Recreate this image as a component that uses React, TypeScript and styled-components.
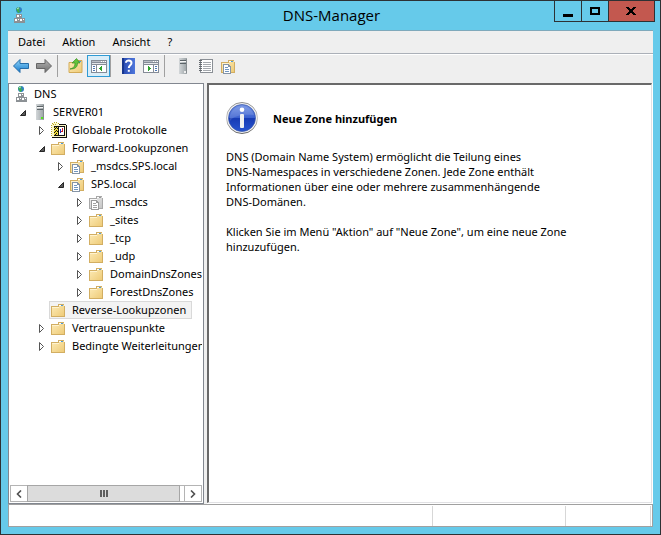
import React from 'react';
import styled, { createGlobalStyle } from 'styled-components';

const GlobalStyle = createGlobalStyle`
  *, *::before, *::after { box-sizing: border-box; }
  body { margin: 0; }
  body, button { font-family: "Noto Sans", "Open Sans", sans-serif; font-size: 11px; color: #000; }
  button { padding: 0; margin: 0; border: 0; background: none; }
  svg { display: block; flex: none; }
`;

const Window = styled.div`
  display: flex;
  flex-direction: column;
  min-height: 100vh;
  padding: 0 7px 7px;
  border: 1px solid #2d3134;
  background: #66caea;
`;

const TitleBar = styled.header`
  display: grid;
  grid-template-columns: 101px 1fr 101px;
  height: 29px;
  margin: 0 -2px 0 0;
`;

const TitleIcon = styled.div`
  padding: 6px 0 0 3px;
`;

const Title = styled.h1`
  margin: 0;
  font-family: "Open Sans", sans-serif;
  font-size: 15px;
  font-weight: 400;
  line-height: 29px;
  text-align: center;
`;

const Caption = styled.div`
  display: flex;
  height: 21px;
  border: 1px solid #2d3134;
  border-top: 0;
`;

const CaptionButton = styled.button<{ $grow: number; $close?: boolean }>`
  display: flex;
  flex: ${(p) => p.$grow} 1 0;
  align-items: center;
  justify-content: center;
  background: ${(p) => (p.$close ? '#c3584f' : 'transparent')};
  & + & { border-left: 1px solid #2d3134; }
`;

const Client = styled.main`
  display: flex;
  flex: 1;
  flex-direction: column;
  border-top: 1px solid #7fa9bb;
  background: #efefef;
`;

const MenuBar = styled.nav`
  display: flex;
  gap: 17px;
  height: 23px;
  padding: 0 10px;
  border-bottom: 1px solid #abb0b8;
`;

const MenuItem = styled.button`
  line-height: 22px;
`;

const Toolbar = styled.div`
  display: flex;
  align-items: center;
  height: 29px;
  padding: 0 1px 6px;
  border-top: 1px solid #fff;
`;

const ToolButton = styled.button<{ $pressed?: boolean }>`
  display: flex;
  align-items: center;
  justify-content: center;
  width: 23px;
  height: 22px;
  border: 1px solid ${(p) => (p.$pressed ? '#2f9bd4' : 'transparent')};
  background: ${(p) => (p.$pressed ? '#d9edf8' : 'transparent')};
`;

const Separator = styled.span<{ $wide?: boolean }>`
  width: 1px;
  height: 22px;
  margin: 0 ${(p) => (p.$wide ? 5 : 6)}px 0 ${(p) => (p.$wide ? 0 : 2)}px;
  background: #a0a0a0;
`;

const Panes = styled.div`
  display: grid;
  flex: 1;
  grid-template-columns: 196px minmax(0, 1fr);
  gap: 3px;
`;

const TreePane = styled.section`
  display: flex;
  flex-direction: column;
  min-width: 0;
  padding: 1px;
  border: 1px solid #828790;
  background: #fff;
`;

const Tree = styled.ul`
  flex: 1;
  margin: 0;
  padding: 0;
  overflow: hidden;
  list-style: none;
`;

const TreeRow = styled.li<{ $level: number }>`
  display: flex;
  align-items: center;
  height: 18px;
  padding-left: ${(p) => (p.$level ? p.$level * 19 - 10 : 1)}px;
  white-space: nowrap;
`;

const Expander = styled.button`
  display: flex;
  flex: none;
  align-items: center;
  width: 11px;
  height: 18px;
`;

const Spacer = styled.span`
  flex: none;
  width: 11px;
`;

const Node = styled.span<{ $selected?: boolean }>`
  display: flex;
  flex: none;
  align-items: center;
  gap: 5px;
  height: 18px;
  padding: 0 5px 0 1px;
  border: 1px solid ${(p) => (p.$selected ? '#d9d9d9' : 'transparent')};
  background: ${(p) => (p.$selected ? '#f3f3f3' : 'transparent')};
  line-height: 16px;
`;

const ScrollBar = styled.div`
  display: flex;
  height: 17px;
  border: 1px solid #b4b4b4;
`;

const ScrollButton = styled.button`
  display: flex;
  align-items: center;
  justify-content: center;
  width: 16px;
`;

const ScrollTrack = styled.div`
  display: flex;
  flex: 1;
  padding-right: 4px;
  border-right: 1px solid #b4b4b4;
`;

const ScrollThumb = styled.div`
  display: flex;
  flex: 1;
  align-items: center;
  justify-content: center;
  margin: -1px 0;
  border: 1px solid #a6a6a6;
  background: #dcdcdc;
`;

const DetailFrame = styled.section`
  padding: 0 1px 1px 0;
  background: #fff;
`;

const Detail = styled.div`
  height: 100%;
  padding: 17px;
  border: 2px solid #696969;
  border-color: #696969 #e1e1e4 #e1e1e4 #696969;
  border-width: 2px 1px 1px 2px;
`;

const DetailHeading = styled.div`
  display: flex;
  align-items: center;
  gap: 15px;
  margin-bottom: 15px;
`;

const Heading = styled.h2`
  margin: 0;
  font-size: 11px;
  font-weight: 700;
`;

const Paragraph = styled.p`
  margin: 0 0 15px;
  line-height: 15px;
`;

const StatusBar = styled.footer`
  display: grid;
  grid-template-columns: minmax(0, 1fr) 133px 85px;
  height: 23px;
  padding: 1px 1px 0 0;
  border: 1px solid #a0a0a0;
  background: #fff;
`;

const StatusCell = styled.span`
  border-right: 1px solid #d7d7d7;
`;

const GradientStore = styled.svg`
  position: absolute;
`;

const Svg = ({ children, w = 16, h = 16, smooth }: { children: React.ReactNode; w?: number; h?: number; smooth?: boolean }) => (
  <svg width={w} height={h} viewBox={`0 0 ${w} ${h}`} shapeRendering={smooth ? 'auto' : 'crispEdges'} aria-hidden="true">
    {children}
  </svg>
);

const Gradients = () => (
  <GradientStore width="0" height="0" aria-hidden="true">
    <defs>
      <linearGradient id="folder" x2="1" y2="1"><stop stopColor="#fdebb6" /><stop offset="1" stopColor="#eecb78" /></linearGradient>
      <linearGradient id="grey" x2="1" y2="1"><stop stopColor="#ededed" /><stop offset="1" stopColor="#c6c6c6" /></linearGradient>
      <linearGradient id="blueArrow" x2="0" y2="1"><stop stopColor="#8fd6fa" /><stop offset="1" stopColor="#1679cc" /></linearGradient>
      <linearGradient id="greyArrow" x2="0" y2="1"><stop stopColor="#b5b5b5" /><stop offset="1" stopColor="#6e6e6e" /></linearGradient>
      <linearGradient id="book" x2="1" y2="0"><stop stopColor="#2446ad" /><stop offset="1" stopColor="#4f77dc" /></linearGradient>
      <linearGradient id="info" x2="0" y2="1"><stop stopColor="#7292e4" /><stop offset=".48" stopColor="#3c62d0" /><stop offset=".52" stopColor="#173bb4" /><stop offset="1" stopColor="#2855d0" /></linearGradient>
      <linearGradient id="rim" x2="0" y2="1"><stop stopColor="#8c8c8c" /><stop offset=".5" stopColor="#c9c9c9" /><stop offset="1" stopColor="#666" /></linearGradient>
      <linearGradient id="tower" x2="1" y2="0"><stop stopColor="#d3d7d9" /><stop offset="1" stopColor="#9aa1a4" /></linearGradient>
    </defs>
  </GradientStore>
);

const NetworkIcon = () => (
  <Svg smooth>
    <circle cx="8" cy="3" r="3" fill="#2f7fc8" />
    <path d="M5 2l2-2 2 1-1 2 1 2-2 1-1-2zM9 3h1v1H9z" fill="#3fae49" />
    <path d="M6 1.500l1-1h1l-1 2z" fill="#c5eaf5" />
    {[[5, 7], [3, 11], [8, 11]].map(([x, y]) => (
      <g key={x} shapeRendering="crispEdges">
        <rect x={x} y={y} width="6" height="4" fill="#8d9296" />
        <path d={`M${x + 1} ${y + 1}h2v2h-2zM${x + 4} ${y + 1}h1v1h-1z`} fill="#fff" />
      </g>
    ))}
    <path d="M3 15.500h11" stroke="#8b9094" />
  </Svg>
);

const FolderShape = ({ grey }: { grey?: boolean }) => (
  <>
    <path d="M0 4h7V2h6v2h1v11H0z" fill={grey ? '#a9a9a9' : '#d2ae62'} />
    <path d="M1 5h7V3h5v2h0v9H1z" fill={grey ? 'url(#grey)' : 'url(#folder)'} />
    <path d="M8 3h4v1H8z" fill="#fff" />
    <path d="M10 3h2v1h-2z" fill={grey ? '#999' : '#4b9bdc'} />
    <path d="M1 5h7v1H1z" fill={grey ? '#f8f8f8' : '#fff3cf'} />
  </>
);

const FolderIcon = () => <Svg><FolderShape /></Svg>;

const ZoneIcon = ({ grey }: { grey?: boolean }) => {
  const line = grey ? '#a2a2a2' : '#7096c0';
  return (
    <Svg>
      <FolderShape grey={grey} />
      <path d="M2 6h6v1h1v1h1v8H2z" fill={grey ? '#9a9a9a' : '#8594a5'} />
      <path d="M3 7h4v2h2v6H3z" fill="#fff" />
      <path d="M4 9.500h3M4 11.500h4M4 13.500h4" stroke={line} />
    </Svg>
  );
};

const LogsIcon = () => (
  <Svg>
    <path d="M1 1h6v2h8v12H1z" fill="#fbf7c4" />
    <path d="M1 1h1v1H1zM3 0h1v1H3zM5 0h1v1H5zM7 1h1v1H7zM0 3h1v1H0zM0 5h1v1H0zM0 7h1v1H0zM0 9h1v1H0zM0 11h1v1H0zM0 13h1v1H0zM2 2h1v1H2zM4 2h1v1H4z" fill="#b7a71e" />
    <path d="M8 2h7v1H8zM15 3h1v13h-1zM1 15h15v1H1z" fill="#111" />
    <path d="M3 4h10v1H3zM3 13h10v1H3zM13 4h1v10h-1zM7 5h1v8H7z" fill="#111" />
    <path d="M3 5h4v8H3z" fill="#f3df39" />
    <path d="M3 5h1v1H3zM5 5h1v1H5zM4 6h1v1H4zM6 6h1v1H6zM3 7h1v1H3zM5 8h1v1H5zM4 9h1v1H4zM6 9h1v1H6zM3 10h1v1H3zM5 11h1v1H5zM4 12h1v1H4z" fill="#111" />
    <path d="M8 5h5v8H8z" fill="#fff" />
    <path d="M9 7h1v4H9z" fill="#2437b7" />
    <path d="M11 6h1v4h-2V9h1z" fill="#d41c28" />
  </Svg>
);

const ServerIcon = ({ running }: { running?: boolean }) => (
  <Svg>
    <path d="M4 0h8v16H4z" fill="url(#tower)" />
    <path d="M5 2h6v1H5zM5 5h6v1H5z" fill="#5b6367" />
    <path d="M5 3h6v1H5z" fill="#f5f5f5" />
    <path d="M11 1h1v14h-1z" fill="#858b8e" />
    <path d="M9 13h2v2H9z" fill={running ? '#54e41e' : '#eee'} />
  </Svg>
);

const ArrowIcon = ({ forward }: { forward?: boolean }) => (
  <Svg smooth>
    <path
      d={forward ? 'M15.5 8L9 1.5v4H.5v5H9v4z' : 'M.5 8L7 1.5v4h8.5v5H7v4z'}
      fill={forward ? 'url(#greyArrow)' : 'url(#blueArrow)'}
      stroke={forward ? '#666' : '#256da9'}
    />
  </Svg>
);

const UpFolderIcon = () => (
  <Svg smooth>
    <path d="M1 4.5h6l1-2h6v12H1z" fill="url(#folder)" stroke="#d3ab57" />
    <path d="M10 3h3v1h-3z" fill="#4b9bdc" />
    <path d="M2 11c4-1 5-3 5-6H4l4.500-4.500L12 5h-2.500c0 4-2 6-7.500 6z" fill="#62c33a" stroke="#398d25" strokeWidth=".7" />
  </Svg>
);

const PanelIcon = ({ right }: { right?: boolean }) => (
  <Svg>
    <path d="M0 2h16v13H0z" fill="#858c97" />
    <path d="M1 3h14v1H1z" fill="#b9bec6" />
    <path d="M10 3h1v1h-1zM12 3h1v1h-1zM14 3h1v1h-1z" fill="#fff" />
    <path d="M1 5h14v1H1z" fill="#e4e7eb" />
    <path d={right ? 'M1 7h9v7H1zM11 7h4v7h-4z' : 'M1 7h4v7H1zM6 7h9v7H6z'} fill="#fff" />
    <path d={right ? 'M12 8h2v1h-2zM12 10h2v1h-2zM12 12h2v1h-2z' : 'M2 8h2v1H2zM2 10h2v1H2zM2 12h2v1H2z'} fill="#4f78b4" />
    <path d={right ? 'M5 8h1v1h1v1h1v1H7v1H6v1H5z' : 'M11 8h-1v1H9v1H8v1h1v1h1v1h1z'} fill="#2da32d" />
  </Svg>
);

const HelpIcon = () => (
  <Svg smooth>
    <path d="M2 0h13v16H2z" fill="url(#book)" />
    <path d="M2 0h2v16H2z" fill="#17368e" />
    <path d="M6 4.800C6 1.700 11.500 1.700 11.500 5c0 2.300-2.700 2.200-2.700 5" fill="none" stroke="#fff" strokeWidth="2" />
    <path d="M7.800 11.800h2v2h-2z" fill="#fff" />
  </Svg>
);

const ListIcon = () => (
  <Svg>
    <path d="M2 1h13v14H2z" fill="#8a8f95" />
    <path d="M3 2h11v12H3z" fill="#fff" />
    <path d="M5 4h8v1H5zM5 6h8v1H5zM5 8h8v1H5zM5 10h8v1H5zM5 12h8v1H5z" fill="#a5a9ae" />
    <path d="M1 2h3v1H1zM1 4h3v1H1zM1 6h3v1H1zM1 8h3v1H1zM1 10h3v1H1zM1 12h3v1H1z" fill="#666b70" />
  </Svg>
);

const ExpanderIcon = ({ open }: { open?: boolean }) => (
  <Svg w={8} h={12} smooth>
    {open ? <path d="M6.500 4.500v5h-5z" fill="#595959" stroke="#262626" /> : <path d="M1.500 2.500v8l4-4z" fill="#fff" stroke="#555" />}
  </Svg>
);

const InfoIcon = () => (
  <Svg w={32} h={32} smooth>
    <circle cx="16" cy="16" r="15.5" fill="#f2f2f2" stroke="url(#rim)" />
    <circle cx="16" cy="16" r="13.5" fill="url(#info)" stroke="#3655a8" strokeWidth=".7" />
    <path d="M4 19C8 13 18 12 28 13A12.5 12.5 0 0 0 4 13z" fill="#fff" opacity=".13" />
    <circle cx="16" cy="7.8" r="2.3" fill="#fff" />
    <rect x="14" y="12" width="4" height="14" rx="1" fill="#f1f1f1" />
  </Svg>
);

const Chevron = ({ right }: { right?: boolean }) => (
  <Svg w={6} h={8} smooth>
    <path d={right ? 'M1 .5L4.5 4 1 7.5' : 'M5 .5L1.5 4 5 7.5'} fill="none" stroke="#505050" strokeWidth="1.6" />
  </Svg>
);

type TreeItem = { label: string; level: number; icon: React.ReactNode; open?: boolean; leaf?: boolean; selected?: boolean };

const items: TreeItem[] = [
  { label: 'DNS', level: 0, icon: <NetworkIcon />, leaf: true },
  { label: 'SERVER01', level: 1, icon: <ServerIcon running />, open: true },
  { label: 'Globale Protokolle', level: 2, icon: <LogsIcon /> },
  { label: 'Forward-Lookupzonen', level: 2, icon: <FolderIcon />, open: true },
  { label: '_msdcs.SPS.local', level: 3, icon: <ZoneIcon /> },
  { label: 'SPS.local', level: 3, icon: <ZoneIcon />, open: true },
  { label: '_msdcs', level: 4, icon: <ZoneIcon grey /> },
  { label: '_sites', level: 4, icon: <FolderIcon /> },
  { label: '_tcp', level: 4, icon: <FolderIcon /> },
  { label: '_udp', level: 4, icon: <FolderIcon /> },
  { label: 'DomainDnsZones', level: 4, icon: <FolderIcon /> },
  { label: 'ForestDnsZones', level: 4, icon: <FolderIcon /> },
  { label: 'Reverse-Lookupzonen', level: 2, icon: <FolderIcon />, leaf: true, selected: true },
  { label: 'Vertrauenspunkte', level: 2, icon: <FolderIcon /> },
  { label: 'Bedingte Weiterleitungen', level: 2, icon: <FolderIcon /> },
];

export default function App() {
  return (
    <>
      <GlobalStyle />
      <Gradients />
      <Window>
        <TitleBar>
          <TitleIcon><NetworkIcon /></TitleIcon>
          <Title>DNS-Manager</Title>
          <Caption>
            <CaptionButton $grow={27} aria-label="Minimieren">
              <Svg w={10} h={11}><path d="M0 8h10v3H0z" /></Svg>
            </CaptionButton>
            <CaptionButton $grow={26} aria-label="Maximieren">
              <Svg w={10} h={8}><path d="M1 1h8v6H1z" fill="none" stroke="#000" strokeWidth="2" /></Svg>
            </CaptionButton>
            <CaptionButton $grow={46} $close aria-label="Schließen">
              <Svg w={10} h={8}><path d="M0 0h3v1h1v1h2V1h1V0h3v1H9v1H8v1H7v2h1v1h1v1h1v1H7V7H6V6H4v1H3v1H0V7h1V6h1V5h1V3H2V2H1V1H0z" /></Svg>
            </CaptionButton>
          </Caption>
        </TitleBar>
        <Client>
          <MenuBar>
            {['Datei', 'Aktion', 'Ansicht', '?'].map((m) => <MenuItem key={m}>{m}</MenuItem>)}
          </MenuBar>
          <Toolbar>
            <ToolButton aria-label="Zurück"><ArrowIcon /></ToolButton>
            <ToolButton aria-label="Vorwärts"><ArrowIcon forward /></ToolButton>
            <Separator />
            <ToolButton aria-label="Eine Ebene nach oben"><UpFolderIcon /></ToolButton>
            <ToolButton $pressed aria-label="Konsolenstruktur einblenden"><PanelIcon /></ToolButton>
            <Separator $wide />
            <ToolButton aria-label="Hilfe"><HelpIcon /></ToolButton>
            <ToolButton aria-label="Aktionsbereich einblenden"><PanelIcon right /></ToolButton>
            <Separator />
            <ToolButton aria-label="Server"><ServerIcon /></ToolButton>
            <ToolButton aria-label="Liste"><ListIcon /></ToolButton>
            <ToolButton aria-label="Neue Zone"><ZoneIcon /></ToolButton>
          </Toolbar>
          <Panes>
            <TreePane>
              <Tree role="tree">
                {items.map((it) => (
                  <TreeRow key={it.label} $level={it.level} role="treeitem" aria-selected={!!it.selected} aria-level={it.level + 1}>
                    {it.level > 0 && it.leaf ? <Spacer /> : null}
                    {!it.leaf ? (
                      <Expander aria-label={`${it.label} ${it.open ? 'reduzieren' : 'erweitern'}`}><ExpanderIcon open={it.open} /></Expander>
                    ) : null}
                    <Node $selected={it.selected}>{it.icon}{it.label}</Node>
                  </TreeRow>
                ))}
              </Tree>
              <ScrollBar>
                <ScrollButton aria-label="Nach links"><Chevron /></ScrollButton>
                <ScrollTrack>
                  <ScrollThumb><Svg w={8} h={7}><path d="M0 0h2v7H0zM3 0h2v7H3zM6 0h2v7H6z" fill="#606060" /></Svg></ScrollThumb>
                </ScrollTrack>
                <ScrollButton aria-label="Nach rechts"><Chevron right /></ScrollButton>
              </ScrollBar>
            </TreePane>
            <DetailFrame>
              <Detail>
                <DetailHeading>
                  <InfoIcon />
                  <Heading>Neue Zone hinzufügen</Heading>
                </DetailHeading>
                <Paragraph>
                  DNS (Domain Name System) ermöglicht die Teilung eines<br />
                  DNS-Namespaces in verschiedene Zonen. Jede Zone enthält<br />
                  Informationen über eine oder mehrere zusammenhängende<br />
                  DNS-Domänen.
                </Paragraph>
                <Paragraph>
                  Klicken Sie im Menü "Aktion" auf "Neue Zone", um eine neue Zone<br />
                  hinzuzufügen.
                </Paragraph>
              </Detail>
            </DetailFrame>
          </Panes>
          <StatusBar><StatusCell /><StatusCell /><StatusCell /></StatusBar>
        </Client>
      </Window>
    </>
  );
}
